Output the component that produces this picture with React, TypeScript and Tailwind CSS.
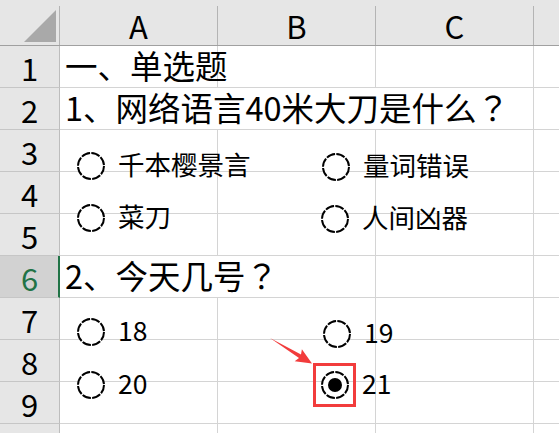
import React from "react";

type Opt = { pos: string; label: string; checked?: boolean };

const options: Opt[] = [
  { pos: "left-[77px] top-[151px]", label: "千本樱景言" },
  { pos: "left-[322px] top-[152px]", label: "量词错误" },
  { pos: "left-[77px] top-[203px]", label: "菜刀" },
  { pos: "left-[321px] top-[204px]", label: "人间凶器" },
  { pos: "left-[77px] top-[317px]", label: "18" },
  { pos: "left-[323px] top-[319px]", label: "19" },
  { pos: "left-[77px] top-[370px]", label: "20" },
  { pos: "left-[321px] top-[370px]", label: "21", checked: true },
];

function RadioCircle({ checked }: { checked?: boolean }) {
  return (
    <svg width="28" height="28" viewBox="0 0 28 28" className="shrink-0">
      <circle cx="14" cy="14" r="13" fill="white" stroke="black" strokeWidth="2" strokeDasharray="8.9 1.3" />
      {checked && <circle cx="14" cy="14" r="7" fill="black" />}
    </svg>
  );
}

function Radio({ opt }: { opt: Opt }) {
  return (
    <div className={`absolute ${opt.pos} flex items-center`}>
      <RadioCircle checked={opt.checked} />
      <span className="ml-[13px] pb-[3px] text-[26.5px] leading-none whitespace-nowrap">{opt.label}</span>
    </div>
  );
}

const colHeaders = ["A", "B", "C", ""];
const rowTexts: Record<number, [string, string]> = {
  1: ["一、单选题", ""],
  2: ["1、网络语言40米大刀是什么", "？"],
  6: ["2、今天几号", "？"],
};

function dataCellClass(r: number, c: number) {
  const noRight = (r === 2 && (c === 0 || c === 1)) || (r === 6 && c === 0);
  return noRight
    ? "border-b border-[#d4d4d4] flex items-end pb-[6px] pl-[5px]"
    : "border-b border-r border-[#d4d4d4] flex items-end pb-[6px] pl-[5px]";
}

export default function App() {
  const rows = [1, 2, 3, 4, 5, 6, 7, 8, 9, 10];
  return (
    <div className="relative w-[559px] h-[433px] overflow-hidden bg-white text-black font-['Noto_Sans_CJK_SC',sans-serif]">
      <div className="grid w-max grid-cols-[60px_158px_158px_158px_158px] grid-rows-[46px_repeat(10,42px)]">
        {/* corner */}
        <div className="relative bg-[#e6e6e6] border-b border-[#a0a0a0] pt-[6px]">
          <div className="h-full border-r border-[#b4b4b4]" />
          <svg className="absolute left-0 top-0" width="60" height="45" viewBox="0 0 60 45">
            <polygon points="56,10 56,42 24,42" fill="#a9a9a9" />
          </svg>
        </div>
        {colHeaders.map((h, i) => (
          <div key={`h${i}`} className="bg-[#e6e6e6] border-b border-[#a0a0a0] pt-[6px]">
            <div className="h-full border-r border-[#b4b4b4] flex items-end justify-center pb-[4px] text-[31px] leading-none">
              {h}
            </div>
          </div>
        ))}
        {rows.map((r) => (
          <React.Fragment key={r}>
            {r === 6 ? (
              <div className="bg-[#d2d2d2] border-b border-b-[#c6c6c6] border-r-2 border-r-[#217346] flex items-end justify-center pb-[4px] pl-[1px] text-[31px] leading-none text-[#217346]">
                {r}
              </div>
            ) : (
              <div className="bg-[#e6e6e6] border-b border-b-[#c6c6c6] border-r border-r-[#bdbdbd] flex items-end justify-center pb-[4px] text-[31px] leading-none">
                {r < 10 ? r : null}
              </div>
            )}
            {[0, 1, 2, 3].map((c) => (
              <div key={c} className={dataCellClass(r, c)}>
                {c === 0 && rowTexts[r] && (
                  <span className="whitespace-nowrap text-[32.5px] leading-none">
                    {rowTexts[r][0]}
                    {rowTexts[r][1] && (
                      <span className="font-['Noto_Sans_CJK_JP',sans-serif]">{rowTexts[r][1]}</span>
                    )}
                  </span>
                )}
              </div>
            ))}
          </React.Fragment>
        ))}
      </div>

      {options.map((o) => (
        <Radio key={o.label} opt={o} />
      ))}

      {/* annotation box */}
      <div className="absolute left-[313px] top-[363px] w-[43px] h-[44px] border-[3px] border-[#f23c3c]" />
      {/* annotation arrow */}
      <svg className="absolute left-[260px] top-[330px]" width="60" height="40" viewBox="0 0 60 40">
        <polygon
          points="10,8 41,24.5 41.9,19.2 52,33.5 34.7,31.2 39,27.9"
          fill="#f23c3c"
        />
      </svg>
    </div>
  );
}
